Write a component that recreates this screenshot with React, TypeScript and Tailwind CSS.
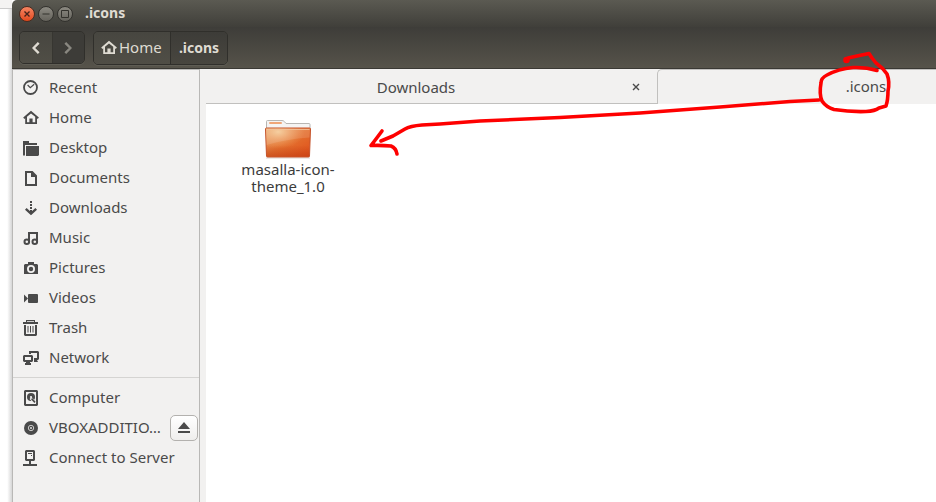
import type { ReactNode } from "react";

function Icon({ children }: { children: ReactNode }) {
  return (
    <svg
      className="size-4 shrink-0"
      viewBox="0 0 16 16"
      fill="#4a4a4a"
      stroke="none"
      aria-hidden="true"
    >
      {children}
    </svg>
  );
}

const houseShape =
  "M8 0.8 L15.9 7.4 L14.7 8.9 L14 8.3 V14 H2.2 V8.3 L1.4 8.9 L0.2 7.4 Z M8 3.4 L4 6.8 V12.2 H6.4 V8.6 H9.6 V12.2 H12.2 V6.8 Z";

const places: { name: string; icon: ReactNode }[] = [
  {
    name: "Recent",
    icon: (
      <>
        <circle cx="7.5" cy="7.5" r="6.5" fill="none" stroke="#4a4a4a" strokeWidth="1.8" />
        <path d="M4.6 5 L7.3 7.7 L11.2 4.2" fill="none" stroke="#4a4a4a" strokeWidth="1.2" />
      </>
    ),
  },
  { name: "Home", icon: <path fillRule="evenodd" d={houseShape} /> },
  {
    name: "Desktop",
    icon: (
      <>
        <path d="M0 1 H6 V3 H14 V5 H2 V15.5 H0 Z" />
        <path d="M3 6 H16 V15 L15 16 H3 Z" />
      </>
    ),
  },
  {
    name: "Documents",
    icon: (
      <path
        fillRule="evenodd"
        d="M2 1 H9.6 L14 5.6 V16 H2 Z M4 3 V14 H12 V7 H8 V3 Z"
      />
    ),
  },
  {
    name: "Downloads",
    icon: (
      <>
        <path d="M7 1h2v2H7z M7 4h2v2H7z M7 7h2v2H7z M7 10h2v3H7z" />
        <path d="M2.8 8.8 L8 13.6 L13.2 8.8" fill="none" stroke="#4a4a4a" strokeWidth="2.4" />
      </>
    ),
  },
  {
    name: "Music",
    icon: (
      <>
        <path d="M5 2 H15 V12 H13 V4 H7 V12 H5 Z" />
        <circle cx="3.8" cy="11.8" r="2.3" fill="none" stroke="#4a4a4a" strokeWidth="2" />
        <circle cx="11.8" cy="11.8" r="2.3" fill="none" stroke="#4a4a4a" strokeWidth="2" />
      </>
    ),
  },
  {
    name: "Pictures",
    icon: (
      <path
        fillRule="evenodd"
        d="M5 2 H11 V4 H14 L15 5 V14 H1 V5 L2 4 H5 Z M8 5 A4 4 0 1 0 8 13 A4 4 0 1 0 8 5 Z M8 6.8 A2.2 2.2 0 1 1 8 11.2 A2.2 2.2 0 1 1 8 6.8 Z"
      />
    ),
  },
  {
    name: "Videos",
    icon: (
      <>
        <path d="M1 4.5 L5 8.5 L1 12.5 Z" />
        <rect x="5" y="4" width="10" height="9" rx="1" />
      </>
    ),
  },
  {
    name: "Trash",
    icon: (
      <>
        <path d="M3 0 H12 V2 H15 V4 H0 V2 H3 Z" />
        <path fill="#f2f1f0" d="M4 1.2h7V2H4z" />
        <path fillRule="evenodd" d="M1 5 H14 V15 L13 16 H2 L1 15 Z M3 5 V14 H12 V5 Z" />
        <path d="M4.5 6h1v6.5h-1z M7 6h1v6.5H7z M9.5 6h1v6.5h-1z" />
      </>
    ),
  },
  {
    name: "Network",
    icon: (
      <>
        <path fillRule="evenodd" d="M6 1 H15 L16 2 V9 L15 10 H11 V8 H14 V3 H8 V4 H6 Z" />
        <path d="M11 10h3l1 2h-4z" />
        <path fillRule="evenodd" d="M1 5 H9 L10 6 V11 L9 12 H1 L0 11 V6 Z M2 7 V10 H8 V7 Z" />
        <path d="M3 12h4v1h1v2H2v-2h1z" />
      </>
    ),
  },
];

const diskIcon = (
  <>
    <path
      fillRule="evenodd"
      d="M2 0 H14 L15 1 V15 L14 16 H2 L1 15 V1 Z M3 2 V14 H13 V2 Z"
    />
    <circle cx="8" cy="7" r="4" />
    <circle cx="8" cy="7" r="1.1" fill="#f2f1f0" />
    <path d="M7.5 8 L12.5 13" stroke="#f2f1f0" strokeWidth="2.6" />
    <path d="M8.6 8.6 L12 12.4" stroke="#4a4a4a" strokeWidth="1.6" />
  </>
);

const discIcon = (
  <>
    <circle cx="8" cy="8" r="7" />
    <circle cx="8" cy="8" r="2.7" fill="none" stroke="#d8d7d6" strokeWidth="0.9" />
    <circle cx="8" cy="8" r="1.1" fill="#d8d7d6" />
  </>
);

const serverIcon = (
  <>
    <path
      fillRule="evenodd"
      d="M3 0 H11 L12 1 V10 L11 11 H8 V14 H14 V16 H0 V14 H6 V11 H3 L2 10 V1 Z M4 2 V9 H10 V2 Z"
    />
    <path d="M5 3h4v1H5z M8 5h1v1H8z" />
  </>
);

function Place({
  name,
  icon,
  action,
}: {
  name: string;
  icon: ReactNode;
  action?: ReactNode;
}) {
  return (
    <li className="flex h-[30px] items-center pr-px">
      <a href="#" className="flex min-w-0 flex-1 items-center gap-[10px] pl-[10px]">
        <Icon>{icon}</Icon>
        <span className="pb-[2px] whitespace-nowrap">{name}</span>
      </a>
      {action}
    </li>
  );
}

function EjectButton() {
  return (
    <button
      type="button"
      aria-label="Eject"
      className="flex h-[26px] w-7 shrink-0 items-center justify-center rounded-[5px] border border-[#b3b1ae] bg-linear-to-b from-white to-[#efeeed]"
    >
      <svg className="h-3 w-3.5" viewBox="0 0 14 12" fill="#4a4a4a" aria-hidden="true">
        <path d="M7 0 L13 7 H1 Z M1 9h12v2H1z" />
      </svg>
    </button>
  );
}

function Sidebar() {
  return (
    <nav
      aria-label="Places"
      className="w-[188px] shrink-0 border-x border-t border-[#b9b8b6] bg-[#f2f1f0] pt-[3px] text-[#4a4a4a]"
    >
      <ul>
        {places.map((p) => (
          <Place key={p.name} name={p.name} icon={p.icon} />
        ))}
      </ul>
      <hr className="mt-1 mb-[5px] border-t border-[#d5d4d2]" />
      <ul>
        <Place name="Computer" icon={diskIcon} />
        <Place name="VBOXADDITIO…" icon={discIcon} action={<EjectButton />} />
        <Place name="Connect to Server" icon={serverIcon} />
      </ul>
    </nav>
  );
}

const circleButton = "flex size-4 items-center justify-center rounded-full border border-[#33322e]";

function TitleBar() {
  return (
    <div className="flex h-[27px] items-center bg-linear-to-b from-[#5b5a52] to-[#403f3a] pl-[7px]">
      <div className="flex gap-[3px]">
        <button
          type="button"
          aria-label="Close"
          className="flex size-4 items-center justify-center rounded-full border border-[#4a2c20] bg-linear-to-b from-[#f58461] to-[#e2481a]"
        >
          <svg className="size-2" viewBox="0 0 8 8" stroke="#47231a" strokeWidth="1.4" aria-hidden="true">
            <path d="M1.5 1.5l5 5M6.5 1.5l-5 5" />
          </svg>
        </button>
        <button type="button" aria-label="Minimize" className={`${circleButton} bg-linear-to-b from-[#8c8a82] to-[#65635c]`}>
          <svg className="size-2" viewBox="0 0 8 8" fill="#33322d" aria-hidden="true">
            <path d="M0.5 3.5h7v1h-7z" />
          </svg>
        </button>
        <button type="button" aria-label="Maximize" className={`${circleButton} bg-linear-to-b from-[#8c8a82] to-[#65635c]`}>
          <svg className="size-2" viewBox="0 0 8 8" fill="none" stroke="#33322d" aria-hidden="true">
            <path d="M0.5 0.5h7v7h-7z" />
          </svg>
        </button>
      </div>
      <h1 className="ml-3 pb-[2px] text-sm leading-[17px] font-bold text-[#dfdbd2]">.icons</h1>
    </div>
  );
}

function Toolbar() {
  return (
    <div className="flex h-[42px] items-center gap-2 border-b border-[#3a3934] bg-linear-to-b from-[#3e3d39] to-[#56534a] pl-[7px] text-[#dfdbd2]">
      <div className="flex h-[33px] w-[66px] overflow-hidden rounded-[5px] border border-[#302f2b] shadow-[0_1px_0_#5f5d54]">
        <button
          type="button"
          aria-label="Back"
          className="flex flex-1 items-center justify-center bg-linear-to-b from-[#474640] to-[#504e46]"
        >
          <svg className="h-3 w-2" viewBox="0 0 8 12" fill="none" stroke="#dfdbd2" strokeWidth="2.4" aria-hidden="true">
            <path d="M6.7 0.8L1.6 6l5.1 5.2" />
          </svg>
        </button>
        <button
          type="button"
          aria-label="Forward"
          className="flex flex-1 items-center justify-center border-l border-[#373631] bg-[#3d3c38]"
        >
          <svg className="h-3 w-2" viewBox="0 0 8 12" fill="none" stroke="#898780" strokeWidth="2.4" aria-hidden="true">
            <path d="M1.3 0.8L6.4 6l-5.1 5.2" />
          </svg>
        </button>
      </div>
      <div className="flex h-[34px] overflow-hidden rounded-[5px] border border-[#302f2b] shadow-[0_1px_0_#5f5d54]">
        <button
          type="button"
          className="flex w-[76px] items-center gap-[2px] bg-linear-to-b from-[#474640] to-[#504e46] pl-[7px]"
        >
          <svg className="size-4 shrink-0" viewBox="0 0 16 16" fill="#dfdbd2" aria-hidden="true">
            <path fillRule="evenodd" d={houseShape} />
          </svg>
          Home
        </button>
        <button
          type="button"
          className="w-[57px] border-l border-[#302f2b] bg-linear-to-b from-[#3d3c38] to-[#48463f] text-sm font-bold"
        >
          .icons
        </button>
      </div>
    </div>
  );
}

function Tabs() {
  return (
    <div role="tablist" className="flex h-[35px] overflow-hidden bg-[#f2f1f0] text-[#4a4a4a]">
      <div className="flex w-[451px] shrink-0 items-center border-b border-[#c1c0be] pt-[2px] pr-[15px]">
        <button type="button" role="tab" aria-selected="false" className="flex-1 pr-1">
          Downloads
        </button>
        <button type="button" aria-label="Close tab" className="flex size-3 items-center justify-center">
          <svg className="size-2" viewBox="0 0 8 8" stroke="#4a4a4a" strokeWidth="1.4" aria-hidden="true">
            <path d="M1 1l6 6M7 1l-6 6" />
          </svg>
        </button>
      </div>
      <button
        type="button"
        role="tab"
        aria-selected="true"
        className="w-[451px] shrink-0 rounded-tl-[5px] border-t border-l border-[#c1c0be] pr-[34px] pb-[2px]"
      >
        .icons
      </button>
    </div>
  );
}

function FolderIcon() {
  return (
    <svg className="h-10 w-12" viewBox="0 0 48 40" aria-hidden="true">
      <defs>
        <linearGradient id="folderFront" x1="0" y1="0" x2="1" y2="1">
          <stop offset="0" stopColor="#e9a56d" />
          <stop offset="0.5" stopColor="#e3702f" />
          <stop offset="1" stopColor="#e04d18" />
        </linearGradient>
        <radialGradient id="folderGlow" cx="0.28" cy="0.12" r="0.6">
          <stop offset="0" stopColor="#f6cf9b" stopOpacity="0.9" />
          <stop offset="1" stopColor="#f0a060" stopOpacity="0" />
        </radialGradient>
        <linearGradient id="folderShade" x1="0" y1="0" x2="0" y2="1">
          <stop offset="0.6" stopColor="#b93a12" stopOpacity="0" />
          <stop offset="1" stopColor="#b93a12" stopOpacity="0.5" />
        </linearGradient>
      </defs>
      <path d="M2 39h44" stroke="#d9d3cf" strokeWidth="1" />
      <path d="M2.5 12V2.5q0-1 1-1H18q1.5 0 2.3 1l1.7 2h23q1 0 1 1V12z" fill="#f5f4f3" stroke="#b8b6b3" />
      <rect x="5" y="3" width="13" height="2" rx="1" fill="#f0a678" />
      <path d="M1.5 10q0-1 1-1h43q1 0 1 1l-1 27q0 1-1 1h-41q-1 0-1-1z" fill="url(#folderFront)" stroke="#c5522a" />
      <path d="M2 9.5h44l-1 28H3z" fill="url(#folderGlow)" />
      <path d="M2 9.5h44l-.5 9Q22 20 2.5 26z" fill="#fff" opacity="0.12" />
      <path d="M2 9.5h44l-1 28H3z" fill="url(#folderShade)" />
      <path d="M2.5 10.5h43" stroke="#f3c39c" opacity="0.8" />
    </svg>
  );
}

function Annotation() {
  return (
    <svg
      className="pointer-events-none absolute top-0 left-0 h-[502px] w-[936px]"
      viewBox="0 0 936 502"
      fill="none"
      stroke="#fe0000"
      strokeWidth="3.6"
      strokeLinecap="round"
      strokeLinejoin="round"
      aria-hidden="true"
    >
      <path d="M819 100 L790 101.5 L720 107 L640 113 L560 117.5 L480 121 L440 124 L422 125 Q410 126 405 129 L393 136 L381 141" />
      <path d="M382 131 L376 139 L371 145.5 Q381 145 391 146 Q396 148 397 154" />
      <path d="M877 70.5 Q866 67 853 67.5 Q838 69 827 75 Q821 78 821 83 Q819 94 822 101 Q826 107 834 109.5 Q850 112 866 111.5 Q875 111 879 108 L886 106 Q888 100 888 91 Q890 82 887 74 Q883 68 876 63 L872 58 L869 53.5 L857 56 L848 58" />
      <circle cx="846.5" cy="60" r="1.5" />
    </svg>
  );
}

export default function App() {
  return (
    <div className="relative flex h-screen overflow-hidden bg-white font-['Noto_Sans','Open_Sans',sans-serif] text-[15px] leading-[17px]">
      <div className="w-3 shrink-0 bg-linear-to-r from-white from-60% to-[#d6d6d6]">
        <div className="h-[9px] border-b border-[#cccccc] bg-[#f4f3f2]" />
      </div>
      <div className="flex min-w-0 flex-1 flex-col overflow-hidden rounded-tl-[5px]">
        <header>
          <TitleBar />
          <Toolbar />
        </header>
        <div className="flex min-h-0 flex-1">
          <Sidebar />
          <div className="w-1.5 shrink-0 bg-[#f2f1f0]" />
          <main className="min-w-0 flex-1 bg-white">
            <Tabs />
            <div className="px-[30px] pt-[15px]">
              <button type="button" className="flex w-[104px] flex-col items-center text-[#3c3c3c]">
                <FolderIcon />
                <span className="mt-[2px]">masalla-icon-theme_1.0</span>
              </button>
            </div>
          </main>
        </div>
      </div>
      <Annotation />
    </div>
  );
}
